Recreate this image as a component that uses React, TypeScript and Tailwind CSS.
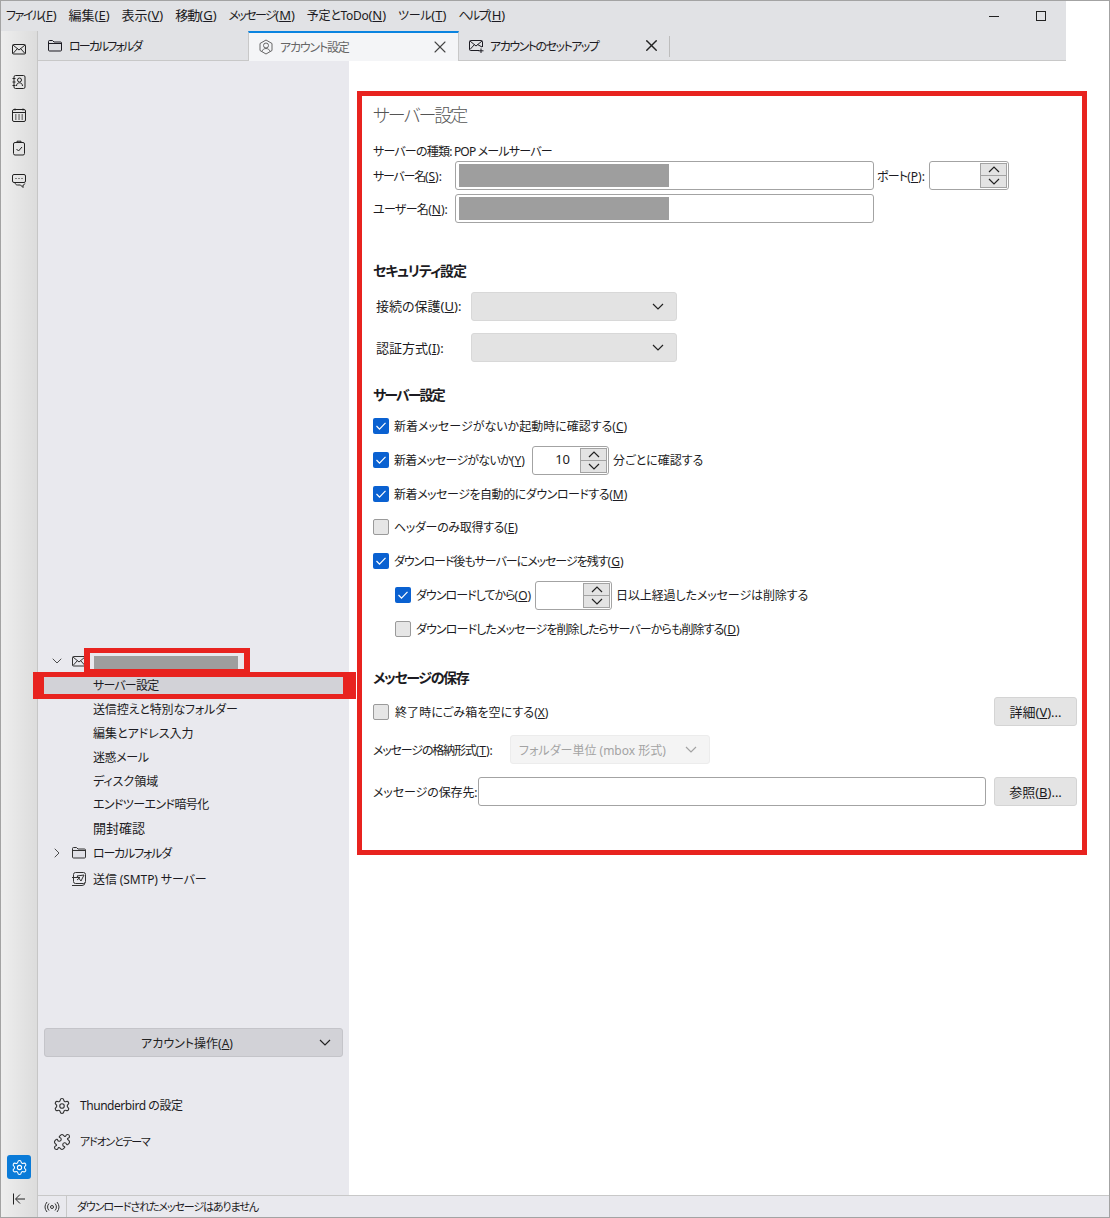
import type { ReactNode } from 'react';
import { ChevronDown, ChevronRight, Puzzle, Settings, X } from 'lucide-react';

function Ic({ children, size = 16, className = '' }: { children: ReactNode; size?: number; className?: string }) {
  return (
    <svg width={size} height={size} viewBox="0 0 16 16" fill="none" stroke="currentColor" strokeWidth="1" strokeLinejoin="round" className={`shrink-0 ${className}`}>
      {children}
    </svg>
  );
}

const MailIcon = () => (
  <Ic>
    <rect x="1.500" y="3.500" width="13" height="9.500" rx="1" />
    <path d="M2 4l6 5 6-5M2 12.500l4.500-5M14 12.500l-4.500-5" />
  </Ic>
);
const MailPlusIcon = () => (
  <Ic>
    <path d="M11 12.500H2.500a1 1 0 0 1-1-1V3.500a1 1 0 0 1 1-1h11a1 1 0 0 1 1 1V9" />
    <path d="M2 3l6 5 6-5M2 11.500l4.500-5M14 9L9.500 6.500M13 10.500v4.500M10.500 12.800h5" />
  </Ic>
);
const FolderIcon = () => (
  <Ic>
    <path d="M1.500 12V3.500a1 1 0 0 1 1-1h3l1.500 1.500h6.500a1 1 0 0 1 1 1V12a1 1 0 0 1-1 1h-11a1 1 0 0 1-1-1z" fill="#d1d1d6" fillOpacity="0.35" />
    <path d="M1.500 5.500h13" />
  </Ic>
);
const AddressIcon = () => (
  <Ic>
    <rect x="3" y="1.500" width="11" height="13" rx="1.500" />
    <circle cx="8.500" cy="6" r="2" />
    <path d="M5.500 12c0-2 1.300-3.200 3-3.200s3 1.200 3 3.200M1.500 4.500h3M1.500 8h3M1.500 11.500h3" />
  </Ic>
);
const CalendarIcon = () => (
  <Ic>
    <rect x="1.500" y="2.500" width="13" height="12" rx="1.500" />
    <path d="M1.500 5.500h13M4 1.500v2M12 1.500v2M4 8h1.500M7.300 8h1.500M10.500 8h1.500M4 10h1.500M7.300 10h1.500M10.500 10h1.500M4 12h1.500M7.300 12h1.500M10.500 12h1.500" />
  </Ic>
);
const TaskIcon = () => (
  <Ic>
    <rect x="2.500" y="2.500" width="11" height="12.500" rx="1.500" />
    <path d="M6 2.500V1.200h4v1.300M5.500 9l2 2 3.500-4" />
  </Ic>
);
const ChatIcon = () => (
  <Ic>
    <path d="M3 1.500h10a1.500 1.500 0 0 1 1.500 1.500v5A1.500 1.500 0 0 1 13 9.500H3A1.500 1.500 0 0 1 1.500 8V3A1.500 1.500 0 0 1 3 1.500z" />
    <path d="M4.500 5.500h1M7.500 5.500h1M10.500 5.500h1M4 9.500c.2 1.500 1 2.500 2.500 2.500h3l2.500 2.500V12c1 0 1.500-.5 1.800-1.500" />
  </Ic>
);
const AccountHexIcon = () => (
  <Ic className="text-[#666]">
    <path d="M8 1l6 3.500v7L8 15l-6-3.500v-7z" />
    <circle cx="8" cy="6.500" r="2.500" />
    <path d="M4 12.500c.5-2 2-3 4-3s3.500 1 4 3" />
  </Ic>
);
const SmtpIcon = () => (
  <Ic>
    <rect x="2.500" y="1.500" width="12" height="11" rx="2" />
    <path d="M1 6.500h8l-3 2.500M1 14.500h10a3 3 0 0 0 3-3M6 5l7-1-3 6z" />
  </Ic>
);
const RadioIcon = () => (
  <Ic>
    <circle cx="8" cy="8" r="1.500" />
    <path d="M5 4.500a5 5 0 0 0 0 7M11 4.500a5 5 0 0 1 0 7M3 3a8 8 0 0 0 0 10M13 3a8 8 0 0 1 0 10" />
  </Ic>
);
const CollapseIcon = () => (
  <Ic>
    <path d="M2.500 2.500v11M14 8H5M9 3.500L4.500 8 9 12.500" />
  </Ic>
);

// wide flat chevron used by selects and spin buttons
function Caret({ up, className = '' }: { up?: boolean; className?: string }) {
  return (
    <svg width="12" height="7" viewBox="0 0 12 7" fill="none" stroke="currentColor" strokeWidth="1.200" className={`shrink-0 ${className}`}>
      <path d={up ? 'M1 6l5-5 5 5' : 'M1 1l5 5 5-5'} />
    </svg>
  );
}

// mnemonic such as (F): keeps normal spacing while the kana before it is tightened
function Key({ k, tail = '' }: { k: string; tail?: string }) {
  return (
    <span className="tracking-normal">
      (<u>{k}</u>){tail}
    </span>
  );
}

function Label({ className = '', children }: { className?: string; children: ReactNode }) {
  return <span className={`shrink-0 pt-[2px] ${className}`}>{children}</span>;
}

function RailItem({ children }: { children: ReactNode }) {
  return <div className="flex h-[33px] items-center justify-center text-[#222]">{children}</div>;
}

function MenuItem({ label, k, className = '' }: { label: string; k: string; className?: string }) {
  return (
    <span>
      <span className={className}>{label}</span>
      <span className="text-[13px]">
        <Key k={k} />
      </span>
    </span>
  );
}

function Redacted({ className }: { className: string }) {
  return <div className={`bg-[#9e9e9e] ${className}`} />;
}

function TextBox({ className, redacted }: { className: string; redacted?: boolean }) {
  return (
    <div className={`h-[29px] rounded-[3px] border border-[#a3a3a3] bg-white pl-[3px] pt-[2px] ${className}`}>
      {redacted && <Redacted className="h-[23px] w-[210px]" />}
    </div>
  );
}

function Spinner({ className, value }: { className: string; value?: string }) {
  return (
    <div className={`flex h-[29px] shrink-0 items-center rounded-[3px] border border-[#a3a3a3] bg-white pr-[1px] ${className}`}>
      <span className="flex-1 pr-[10px] text-right text-[13px]">{value}</span>
      <div className="flex h-[25px] w-[27px] flex-col border border-[#a3a3a3] bg-[#e3e3e3] text-[#222]">
        <div className="flex flex-1 items-center justify-center border-b border-[#a3a3a3]">
          <Caret up />
        </div>
        <div className="flex flex-1 items-center justify-center">
          <Caret />
        </div>
      </div>
    </div>
  );
}

function Check({ on }: { on?: boolean }) {
  if (on) {
    return (
      <div className="flex h-[16px] w-[16px] shrink-0 items-center justify-center rounded-[2px] bg-[#0a61d1]">
        <svg width="12" height="12" viewBox="0 0 12 12" fill="none" stroke="white" strokeWidth="1.200">
          <path d="M1.500 6l3 3.200 6-6.400" />
        </svg>
      </div>
    );
  }
  return <div className="h-[16px] w-[16px] shrink-0 rounded-[2px] border border-[#9a9a9a] bg-[#e6e6e6]" />;
}

function CheckRow({ on, indent, children, top, text = '' }: { on?: boolean; indent?: boolean; children: ReactNode; top: string; text?: string }) {
  return (
    <div className={`flex h-[24px] items-center ${indent ? 'ml-[22px]' : ''} ${top}`}>
      <Check on={on} />
      <Label className={`ml-[5px] ${text}`}>{children}</Label>
    </div>
  );
}

function SelectBox({ className, disabled, children }: { className: string; disabled?: boolean; children?: ReactNode }) {
  return (
    <div className={`flex h-[29px] items-center justify-between rounded-[3px] border pl-[8px] pr-[12px] ${disabled ? 'border-[#ececec] bg-[#f4f4f4] text-[#a3a3a3]' : 'border-[#d8d8d8] bg-[#e3e3e3] text-[#222]'} ${className}`}>
      <Label>{children}</Label>
      <Caret />
    </div>
  );
}

function PushButton({ children }: { children: ReactNode }) {
  return (
    <div className="flex h-[29px] w-[83px] shrink-0 items-center justify-center rounded-[3px] border border-[#d4d4d4] bg-[#e4e4e4] text-[13px]">
      {children}
    </div>
  );
}

function Heading({ children, top, text }: { children: ReactNode; top: string; text: string }) {
  return <h2 className={`flex h-[20px] items-center text-[14px] font-bold ${text} ${top}`}>{children}</h2>;
}

function TreeRow({ children, h, active, icon, text = '' }: { children?: ReactNode; h: string; active?: boolean; icon?: ReactNode; text?: string }) {
  return (
    <div className={`mx-[6px] flex items-center ${h} ${active ? 'bg-[#d2d2d7]' : ''}`}>
      <div className="flex w-[49px] shrink-0 items-center justify-end pr-[6px] text-[#333]">{icon}</div>
      <Label className={text}>{children}</Label>
    </div>
  );
}

export default function App() {
  return (
    <div className="flex h-[1218px] w-[1110px] flex-col overflow-hidden whitespace-nowrap border border-[#a3a3a3] bg-white text-[12px] text-[#1c1b22] [font-family:'Noto_Sans','Noto_Sans_CJK_JP',sans-serif] [font-feature-settings:'palt']">
      {/* menu bar */}
      <div className="flex h-[30px] w-[1065px] shrink-0 items-center bg-[#e1e2e5] pl-[5px]">
        <div className="flex gap-[12px]">
          <MenuItem label="ファイル" k="F" className="tracking-[-1.400px]" />
          <MenuItem label="編集" k="E" className="text-[13px]" />
          <MenuItem label="表示" k="V" className="text-[13px]" />
          <MenuItem label="移動" k="G" className="text-[13px] tracking-[-1px]" />
          <MenuItem label="メッセージ" k="M" className="tracking-[-1.600px]" />
          <MenuItem label="予定とToDo" k="N" className="tracking-[-0.300px]" />
          <MenuItem label="ツール" k="T" className="tracking-[-0.300px]" />
          <MenuItem label="ヘルプ" k="H" className="tracking-[-1.700px]" />
        </div>
        <div className="ml-auto mr-[20px] flex items-center gap-[37px]">
          <div className="h-px w-[10px] bg-[#222]" />
          <div className="h-[10px] w-[10px] border border-[#222]" />
        </div>
      </div>

      <div className="flex min-h-0 flex-1">
        {/* left rail */}
        <div className="flex w-[37px] shrink-0 flex-col border-r border-[#c6c6c6] bg-gradient-to-r from-[#eeeeee] to-[#dcdcdc] pt-[1px]">
          <RailItem><MailIcon /></RailItem>
          <RailItem><AddressIcon /></RailItem>
          <RailItem><CalendarIcon /></RailItem>
          <RailItem><TaskIcon /></RailItem>
          <RailItem><ChatIcon /></RailItem>
          <div className="mx-auto mb-[8px] mt-auto flex h-[24px] w-[24px] items-center justify-center rounded-[3px] bg-[#0a7bd8] text-white">
            <Settings size={17} strokeWidth={1.500} />
          </div>
          <div className="mb-[6px] flex h-[24px] items-center justify-center text-[#222]">
            <CollapseIcon />
          </div>
        </div>

        <div className="flex min-w-0 flex-1 flex-col">
          {/* tabs */}
          <div className="flex h-[30px] w-[1028px] shrink-0 border-b border-[#c8c8c8] bg-[#e1e2e5]">
            <div className="flex w-[210px] items-center pl-[9px]">
              <FolderIcon />
              <Label className="ml-[6px] tracking-[-1.900px]">ローカルフォルダ</Label>
            </div>
            <div className="-mb-px flex w-[211px] items-center border-x border-t-2 border-x-[#c8c8c8] border-t-[#0a84e0] bg-[#f4f5f7] pl-[9px] pr-[8px]">
              <AccountHexIcon />
              <Label className="ml-[6px] tracking-[-1.200px] text-[#666]">アカウント設定</Label>
              <X size={20} strokeWidth={1.300} className="ml-auto text-[#444]" />
            </div>
            <div className="flex w-[210px] items-center pl-[9px] pr-[8px]">
              <MailPlusIcon />
              <Label className="ml-[6px] tracking-[-1.500px]">アカウントのセットアップ</Label>
              <X size={19} strokeWidth={1.800} className="ml-auto text-[#222]" />
            </div>
            <div className="mt-[5px] h-[21px] w-px bg-[#bdbdbd]" />
          </div>

          <div className="flex min-h-0 flex-1">
            {/* sidebar */}
            <aside className="relative flex w-[311px] shrink-0 flex-col bg-[#e9e9ee] pt-[587px]">
              <TreeRow h="h-[25px]" icon={<><ChevronDown size={16} strokeWidth={1.300} className="mr-[6px]" /><MailIcon /></>} />
              <TreeRow h="h-[24px]" active text="tracking-[-0.800px]">サーバー設定</TreeRow>
              <TreeRow h="h-[24px]" text="tracking-[-0.150px]">送信控えと特別なフォルダー</TreeRow>
              <TreeRow h="h-[24px]">編集とアドレス入力</TreeRow>
              <TreeRow h="h-[24px]" text="tracking-[-0.400px]">迷惑メール</TreeRow>
              <TreeRow h="h-[23px]">ディスク領域</TreeRow>
              <TreeRow h="h-[24px]" text="tracking-[-0.600px]">エンドツーエンド暗号化</TreeRow>
              <TreeRow h="h-[24px]" text="text-[13px]">開封確認</TreeRow>
              <TreeRow h="h-[26px]" text="tracking-[-1.200px]" icon={<><ChevronRight size={16} strokeWidth={1.300} className="mr-[6px]" /><FolderIcon /></>}>ローカルフォルダ</TreeRow>
              <TreeRow h="h-[26px]" text="tracking-[-0.100px]" icon={<SmtpIcon />}>送信 (SMTP) サーバー</TreeRow>

              <div className="mx-[6px] mt-[136px] flex h-[29px] items-center rounded-[3px] border border-[#c4c4c9] bg-[#d2d2d7] pr-[11px] text-[#222]">
                <Label className="flex-1 pl-[10px] text-center">
                  アカウント操作<Key k="A" />
                </Label>
                <Caret />
              </div>

              <div className="mt-[31px] flex h-[36px] items-center pl-[15px]">
                <Settings size={18} strokeWidth={1.500} className="mr-[9px] text-[#333]" />
                <span className="tracking-[-0.450px]">Thunderbird の設定</span>
              </div>
              <div className="flex h-[36px] items-center pl-[15px]">
                <Puzzle size={18} strokeWidth={1.500} className="mr-[9px] text-[#333]" />
                <span className="text-[11px] tracking-[-1.200px]">アドオンとテーマ</span>
              </div>

              {/* red annotation boxes */}
              <div className="absolute left-[46px] top-[587px] h-[24px] w-[166px] border-x-[6px] border-b-[3px] border-t-[5px] border-[#e8231f] pl-[4px] pt-[3px]">
                <Redacted className="h-[13px] w-[144px]" />
              </div>
              <div className="absolute left-[-5px] top-[611px] h-[27px] w-[323px] border-y-[5px] border-l-[11px] border-r-[13px] border-[#e8231f]" />
            </aside>

            {/* account settings */}
            <main className="min-w-0 flex-1 pl-[8px] pt-[30px]">
              <section className="w-[730px] border-[5px] border-[#e8231f] pb-[44px] pl-[11px] pr-[5px] pt-[7px]">
                <h1 className="flex h-[24px] items-center text-[18px] font-light tracking-[-2px] text-[#555]">サーバー設定</h1>
                <div className="mt-[14px] flex h-[20px] items-center">
                  <Label className="tracking-[-0.800px]">サーバーの種類: POP メールサーバー</Label>
                </div>

                <div className="flex items-center">
                  <Label className="w-[82px] tracking-[-1.260px]">
                    サーバー名<Key k="S" tail=":" />
                  </Label>
                  <TextBox className="w-[419px]" redacted />
                  <Label className="ml-[3px] w-[52px] tracking-[-0.800px]">
                    ポート<Key k="P" tail=":" />
                  </Label>
                  <Spinner className="w-[80px]" />
                </div>
                <div className="mt-[4px] flex items-center">
                  <Label className="w-[82px] tracking-[-0.700px]">
                    ユーザー名<Key k="N" tail=":" />
                  </Label>
                  <TextBox className="w-[419px]" redacted />
                </div>

                <Heading top="mt-[37px]" text="tracking-[-1.100px]">セキュリティ設定</Heading>
                <div className="ml-[3px] mt-[12px] flex items-center">
                  <span className="w-[95px] shrink-0 text-[13px]">
                    接続の保護<Key k="U" tail=":" />
                  </span>
                  <SelectBox className="w-[206px]" />
                </div>
                <div className="ml-[3px] mt-[12px] flex items-center">
                  <Label className="w-[95px] text-[13px]">
                    認証方式<Key k="I" tail=":" />
                  </Label>
                  <SelectBox className="w-[206px]" />
                </div>

                <Heading top="mt-[22px]" text="tracking-[-1.900px]">サーバー設定</Heading>
                <CheckRow on top="mt-[10px]">
                  新着メッセージがないか起動時に確認する<Key k="C" />
                </CheckRow>
                <div className="mt-[10px] flex h-[24px] items-center">
                  <Check on />
                  <Label className="ml-[5px] w-[138px] tracking-[-0.760px]">
                    新着メッセージがないか<Key k="Y" />
                  </Label>
                  <Spinner className="w-[77px]" value="10" />
                  <Label className="ml-[4px]">分ごとに確認する</Label>
                </div>
                <CheckRow on top="mt-[10px]" text="tracking-[-0.460px]">
                  新着メッセージを自動的にダウンロードする<Key k="M" />
                </CheckRow>
                <CheckRow top="mt-[9px]" text="tracking-[-0.330px]">
                  ヘッダーのみ取得する<Key k="E" />
                </CheckRow>
                <CheckRow on top="mt-[10px]" text="tracking-[-1.030px]">
                  ダウンロード後もサーバーにメッセージを残す<Key k="G" />
                </CheckRow>
                <div className="ml-[22px] mt-[10px] flex h-[24px] items-center">
                  <Check on />
                  <Label className="ml-[5px] w-[119px] tracking-[-0.980px]">
                    ダウンロードしてから<Key k="O" />
                  </Label>
                  <Spinner className="w-[77px]" />
                  <Label className="ml-[4px] tracking-[-0.100px]">日以上経過したメッセージは削除する</Label>
                </div>
                <CheckRow indent top="mt-[10px]" text="tracking-[-0.880px]">
                  ダウンロードしたメッセージを削除したらサーバーからも削除する<Key k="D" />
                </CheckRow>

                <Heading top="mt-[26px]" text="tracking-[-1.400px]">メッセージの保存</Heading>
                <div className="mt-[10px] flex items-center justify-between">
                  <div className="flex items-center">
                    <Check />
                    <Label className="ml-[6px] tracking-[0.100px]">
                      終了時にごみ箱を空にする<Key k="X" />
                    </Label>
                  </div>
                  <PushButton>
                    <Label>
                      詳細<Key k="V" tail="..." />
                    </Label>
                  </PushButton>
                </div>
                <div className="mt-[9px] flex items-center">
                  <Label className="w-[137px] tracking-[-1.160px]">
                    メッセージの格納形式<Key k="T" tail=":" />
                  </Label>
                  <SelectBox className="w-[200px]" disabled>
                    フォルダー単位 (mbox 形式)
                  </SelectBox>
                </div>
                <div className="mt-[13px] flex items-center">
                  <Label className="w-[105px] tracking-[-0.100px]">メッセージの保存先:</Label>
                  <TextBox className="mr-[8px] w-[508px]" />
                  <PushButton>
                    <Label>
                      参照<Key k="B" tail="..." />
                    </Label>
                  </PushButton>
                </div>
              </section>
            </main>
          </div>

          {/* status bar */}
          <div className="flex h-[22px] shrink-0 items-center border-t border-[#c8c8c8] bg-[#e9e9ee]">
            <div className="flex h-full w-[29px] items-center justify-center border-r border-[#c8c8c8] text-[#333]">
              <RadioIcon />
            </div>
            <Label className="ml-[10px] text-[11px] tracking-[-1.100px]">ダウンロードされたメッセージはありません</Label>
          </div>
        </div>
      </div>
    </div>
  );
}
